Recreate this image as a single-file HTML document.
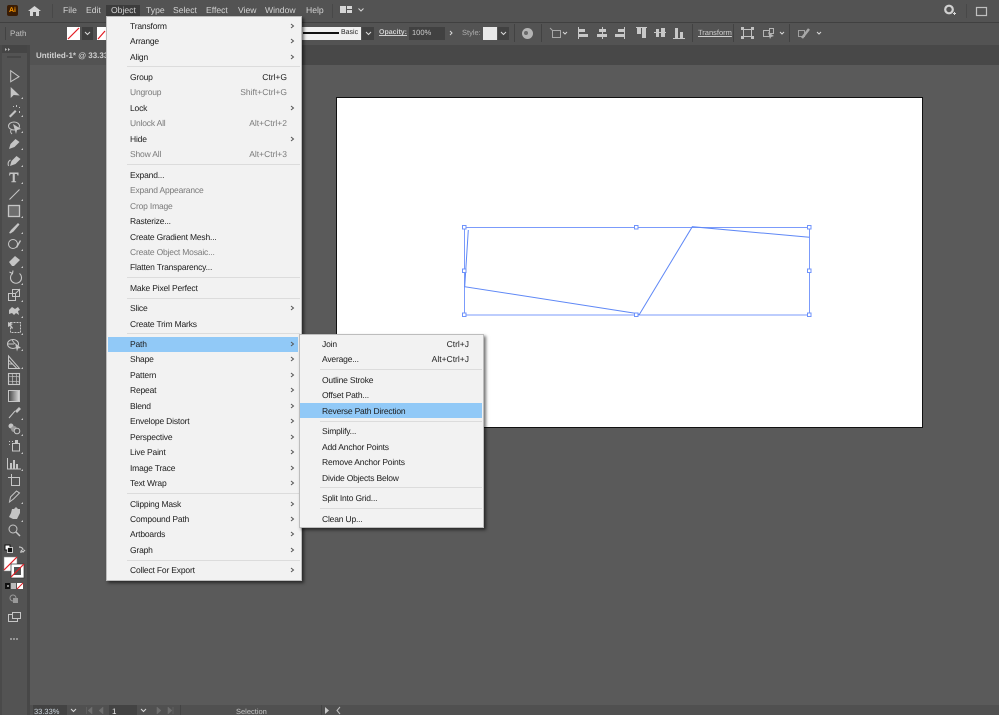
<!DOCTYPE html>
<html><head><meta charset="utf-8"><style>
html,body{margin:0;padding:0;background:#5a5a5a}
#r{position:relative;width:999px;height:715px;overflow:hidden;background:#5a5a5a;font:8.5px/16px "Liberation Sans",sans-serif;color:#1e1e1e;text-rendering:geometricPrecision;filter:blur(.3px)}
#r div{position:absolute}
.b{white-space:nowrap}
.m{color:#d4d4d4;top:2px;font-size:8.6px;line-height:16px;white-space:nowrap}
.l{left:130px;white-space:nowrap;color:#1c1c1c;letter-spacing:-.18px}
.s{left:322px;white-space:nowrap;color:#1c1c1c;letter-spacing:-.18px}
.g{color:#7a7a7a}
.k{right:712px;white-space:nowrap}
.k2{right:530px;white-space:nowrap}
.c{color:#cfcfcf;white-space:nowrap;font-size:7.5px}
.h{height:1px;background:#dcdcdc}
</style></head><body><div id="r">
<div style="left:0;top:0;width:999px;height:22px;background:#535353"></div>
<div style="left:0;top:22px;width:999px;height:1px;background:#404040"></div>
<div style="left:0;top:23px;width:999px;height:22px;background:#535353"></div>
<div style="left:0;top:45px;width:999px;height:20px;background:#484848"></div>
<div style="left:29px;top:45px;width:220px;height:20px;background:#535353"></div>
<div style="left:0;top:45px;width:28px;height:670px;background:#535353"></div>
<div style="left:2px;top:45px;width:25px;height:8px;background:#454545"></div>
<div style="left:0;top:45px;width:2px;height:670px;background:#4a4a4a"></div>
<div style="left:27px;top:45px;width:3px;height:670px;background:#474747"></div>
<div style="left:30px;top:705px;width:969px;height:10px;background:#505050"></div>

<div style="left:336px;top:97px;width:585px;height:329px;background:#fff;border:1px solid #111"></div>

<div class="m" style="left:63px">File</div>
<div class="m" style="left:86px">Edit</div>
<div style="left:106px;top:5px;width:34px;height:11px;background:#3c3c3c"></div>
<div class="m" style="left:111px">Object</div>
<div class="m" style="left:146px">Type</div>
<div class="m" style="left:173px">Select</div>
<div class="m" style="left:206px">Effect</div>
<div class="m" style="left:238px">View</div>
<div class="m" style="left:265px">Window</div>
<div class="m" style="left:306px">Help</div>

<div style="left:7px;top:5px;width:11px;height:11px;background:#3a1c04;border-radius:2px"></div>
<div class="b" style="left:9px;top:5px;line-height:11px;font-size:7px;font-weight:bold;color:#ff9a00">Ai</div>

<div class="c" style="left:10px;top:26px;font-size:8px;color:#c0c0c0">Path</div>
<div style="left:67px;top:27px;width:13px;height:13px;background:#fff"></div>
<div style="left:82px;top:27px;width:11px;height:13px;background:#3e3e3e"></div>
<div style="left:97px;top:27px;width:9px;height:13px;background:#fff"></div>
<div style="left:302px;top:27px;width:59px;height:13px;background:#f0f0f0"></div>
<div style="left:303px;top:32px;width:36px;height:2px;background:#111"></div>
<div class="b" style="left:341px;top:25px;font-size:7px;color:#222">Basic</div>
<div style="left:362px;top:27px;width:12px;height:13px;background:#414141"></div>
<div class="c" style="left:379px;top:25px;font-weight:bold;font-size:7px;text-decoration:underline">Opacity:</div>
<div style="left:409px;top:27px;width:36px;height:13px;background:#414141"></div>
<div class="c" style="left:412px;top:25px">100%</div>
<div class="c" style="left:462px;top:25px;color:#adadad">Style:</div>
<div style="left:483px;top:27px;width:14px;height:13px;background:#e8e8e8"></div>
<div style="left:498px;top:27px;width:11px;height:13px;background:#414141"></div>
<div class="c" style="left:698px;top:25px;text-decoration:underline">Transform</div>
<div class="c" style="left:36px;top:48px;font-weight:bold;font-size:8px;color:#d0d0d0">Untitled-1* @ 33.33%</div>

<svg style="position:absolute;left:0;top:0" width="999" height="715" viewBox="0 0 999 715">
<defs><linearGradient id="gr"><stop offset="0" stop-color="#444"/><stop offset="1" stop-color="#ddd"/></linearGradient></defs>
<g fill="#d6d6d6">
<path d="M28 11l6.500-5 6.500 5h-2v5h-3v-4h-3v4h-3v-5z"/>
<rect x="340" y="6" width="6" height="7"/><rect x="347" y="6" width="5" height="3"/><rect x="347" y="10" width="5" height="3"/>
<path d="M953 13h1v-1h1v1h1v1h-1v1h-1v-1h-1z"/>
</g>
<circle cx="949" cy="9.500" r="3.800" fill="none" stroke="#d0d0d0" stroke-width="2.200"/>
<rect x="976.500" y="7.500" width="10" height="8" fill="none" stroke="#c0c0c0" stroke-width="1.200"/>
<path d="M358.500 8.500l2.500 2.500 2.500-2.500" fill="none" stroke="#d6d6d6"/>
<path d="M68 39l11-11" stroke="#e31b23" stroke-width="1.200"/>
<path d="M98 39l7-8" stroke="#e31b23" stroke-width="1.200"/>
<path d="M85 32l2.500 2.500 2.500-2.500M366 32l2.500 2.500 2.500-2.500M501 32l2.500 2.500 2.500-2.500M450 31l2 2-2 2M563 32l2 2 2-2M780 32l2 2 2-2M817 32l2 2 2-2" fill="none" stroke="#d8d8d8"/>
<circle cx="527.500" cy="33.500" r="5.500" fill="#b4b4b4"/><circle cx="526" cy="33" r="2" fill="#6a6a6a"/>
<path d="M552.500 30.500h8v7h-8zM550 28l3 3" fill="none" stroke="#a8a8a8"/>
<g fill="#c8c8c8">
<rect x="578" y="27" width="1" height="12"/><rect x="579" y="29" width="6" height="3"/><rect x="579" y="34" width="9" height="3"/>
<rect x="602" y="27" width="1" height="12"/><rect x="599" y="29" width="7" height="3"/><rect x="597" y="34" width="10" height="3"/>
<rect x="624" y="27" width="1" height="12"/><rect x="618" y="29" width="6" height="3"/><rect x="615" y="34" width="9" height="3"/>
<rect x="636" y="27" width="11" height="1"/><rect x="637" y="28" width="4" height="6"/><rect x="642" y="28" width="4" height="10"/>
<rect x="654" y="32" width="12" height="1"/><rect x="656" y="29" width="3" height="8"/><rect x="661" y="28" width="4" height="9"/>
<rect x="673" y="38" width="12" height="1"/><rect x="675" y="28" width="3" height="10"/><rect x="680" y="32" width="3" height="6"/>
</g>
<path d="M743.500 29.500h8v7h-8z" fill="none" stroke="#c0c0c0"/>
<path d="M741 27h3v3h-3zM751 27h3v3h-3zM741 36h3v3h-3zM751 36h3v3h-3z" fill="#c0c0c0"/>
<path d="M763.500 30.500h6v6h-6zM769.500 28.500h4v5h-4z" fill="none" stroke="#b4b4b4"/><path d="M768 32l6 4-3 1-1 2z" fill="#b4b4b4"/>
<path d="M798.500 30.500h6v6h-6z" fill="none" stroke="#a0a0a0"/><path d="M802 38l7-9" stroke="#a8a8a8" stroke-width="2.500"/>
<path d="M514.500 24v18M541.500 24v18M692.500 24v18M733.500 24v18M789.500 24v18M5.500 27v13" stroke="#424242"/>
<path d="M332.500 4v14M52.500 4v14M966.500 4v14" stroke="#484848"/>
<path d="M5 48l2 1.500-2 1.500zM8 48l2 1.500-2 1.500z" fill="#bbb"/>
<rect x="7" y="56" width="14" height="2" fill="#474747"/>

<!-- tools -->
<g fill="none" stroke="#c6c6c6" stroke-width="1">
<path d="M10.700 70.700v11l8.300-5z"/>
<path d="M9.500 199.500l10-10"/>
<rect x="8.500" y="205.500" width="11" height="11" fill="#6e6e6e" stroke-width="1.300"/>
<ellipse cx="14" cy="126" rx="5.500" ry="4"/><path d="M11 130c-1 2 0 3 1 4"/>
<path d="M8.500 166c-1-3 0-5 2-6"/>
<circle cx="13" cy="244" r="4.500"/>
<path d="M19.500 273.500a5.500 5.500 0 1 1-7 0M9.500 272l3 1.500 .5-3" stroke-width="1.100"/>
<rect x="8.500" y="293.500" width="7" height="7"/><rect x="12.500" y="289.500" width="7" height="7"/><path d="M15 294l5-5"/>
<path d="M10.500 322.500h10v10h-10z" stroke-dasharray="2 1"/>
<ellipse cx="13" cy="344" rx="5.500" ry="4.500"/><path d="M8 344h6M12 340l3 4"/>
<path d="M8.500 356v12.500h11zM8.500 360l8 8M8.500 364h4"/>
<rect x="8.500" y="373.500" width="11" height="11" stroke-width="1.100"/>
<path d="M9 376c3 2 6-1 10 1M9 381c3 2 6-1 10 1M12 374c2 3-1 6 1 10M16 374c2 3-1 6 1 10" stroke-width=".7"/>
<rect x="8.500" y="390.500" width="11" height="11" fill="url(#gr)"/>
<path d="M9 418l6-7"/>
<rect x="12.500" y="443.500" width="7" height="7.500"/>
<path d="M7.500 458v11h13.500"/>
<rect x="11.500" y="477.500" width="8" height="8"/><path d="M8 477.500h6M11.500 474v6"/>
<path d="M9.500 502l1-5 6-6 3 2-6 6z"/>
<circle cx="13" cy="529" r="4"/><path d="M16 532l4 4" stroke-width="1.500"/>
<path d="M19 547c2 0 4 1 4 3M25 550l-2 2-2-2M20 552h2" stroke-width="1.200"/>
<rect x="8.500" y="614.500" width="9" height="7"/><rect x="12.500" y="612.500" width="8" height="6" fill="#535353"/>
</g>
<g fill="#c4c4c4">
<path d="M10.700 87v11l3-3 6 .5z"/>
<path d="M9 116l6-6 1.500 1.500-6 6zM16 105h1v2h-1zM19 107h1v1h-1zM19 111h1v2h-1zM13 106h1v1h-1z"/>
<path d="M13 124l8 5-4 1-1 4z"/>
<path d="M9 149l1.500-5 5-5 4 3-5 5z"/>
<path d="M10 166l1.500-5 5-5 4 3-5 5z"/>
<path d="M9.500 172.500h9v3h-1l-.5-1.500h-2.200v7.200h1.300v1h-4.700v-1h1.300v-7.200h-2.200l-.5 1.500h-1z"/>
<path d="M9 233l2-3 7-7 1.500 1.500-6 7-3 2z"/>
<path d="M16 247l4-7 1 1-4 7z"/>
<path d="M9 262l6-6 5 4-6 6h-2z"/>
<path d="M9 310l3-3 3 2 3-2 2 3-2 1 1 4-3-2-2 2-2-2-3 1z"/>
<path d="M8 322l5 2-2 1 2 3-1 1-2-3-2 1z"/>
<path d="M15 343l6 5-3 .5-1 3z"/>
<path d="M15 411l4-4 2 2-4 4z"/>
<circle cx="11" cy="426" r="2.500"/><circle cx="14" cy="429" r="3" fill="#999"/><circle cx="17" cy="431" r="2.800" fill="#535353" stroke="#c6c6c6"/>
<path d="M9 441h1v1h-1zM12 441h1v1h-1zM9 444h1v1h-1zM15 440h3v3h-3z"/>
<rect x="10" y="463" width="2" height="6"/><rect x="13" y="460" width="2" height="9"/><rect x="16" y="464" width="2" height="5"/>
<path d="M9 517l2-4 1-4 2 0 2-2 2 2 2 0 0 4-3 6h-4z"/>
<circle cx="11" cy="639" r=".9"/><circle cx="14" cy="639" r=".9"/><circle cx="17" cy="639" r=".9"/>
<path d="M23 97v2h-2zM23 115v2h-2zM23 131v2h-2zM23 148v2h-2zM23 165v2h-2zM23 182v2h-2zM23 199v2h-2zM23 216v2h-2zM23 232v2h-2zM23 249v2h-2zM23 266v2h-2zM23 283v2h-2zM23 300v2h-2zM23 316v2h-2zM23 333v2h-2zM23 349v2h-2zM23 367v2h-2zM23 418v2h-2zM23 434v2h-2zM23 452v2h-2zM23 469v2h-2zM23 502v2h-2zM23 520v2h-2z"/>
</g>
<rect x="5" y="545" width="5" height="5" fill="#fff" stroke="#111"/><rect x="7.500" y="547.500" width="5" height="5" fill="#111" stroke="#fff" stroke-width=".7"/>
<rect x="4" y="557" width="13" height="14" fill="#fff" stroke="#888" stroke-width=".5"/>
<path d="M4 570l13-13" stroke="#e31b23" stroke-width="1.200"/>
<rect x="11" y="564" width="13" height="14" fill="#fff" stroke="#333" stroke-width=".7"/>
<rect x="14" y="567" width="7" height="8" fill="#555"/>
<path d="M11 577l13-13" stroke="#e31b23" stroke-width="1.200"/>
<rect x="5" y="583" width="5" height="6" fill="#111"/><rect x="7" y="585" width="2" height="2" fill="#888"/>
<rect x="11" y="583" width="5" height="6" fill="#bbb"/><rect x="17" y="583" width="6" height="6" fill="#fff"/>
<path d="M17 589l6-6" stroke="#e31b23"/>
<circle cx="13" cy="598" r="3" fill="none" stroke="#999"/><rect x="13" y="598" width="5" height="5" fill="#999"/>

<g fill="none" stroke-width="1">
<path d="M464.500 227.500h345v87.500h-345z" stroke="#7b9bfb"/>
<path d="M468.300 230L464.700 286.700L636.700 313.500L639.300 314.500L692.300 226.700L809.300 237.300" stroke="#5f88f6"/>
</g>
<g fill="#fff" stroke="#6f93fb">
<rect x="462.500" y="225.500" width="3.500" height="3.500"/><rect x="634.500" y="225.500" width="3.500" height="3.500"/><rect x="807.500" y="225.500" width="3.500" height="3.500"/>
<rect x="462.500" y="269" width="3.500" height="3.500"/><rect x="807.500" y="269" width="3.500" height="3.500"/>
<rect x="462.500" y="313" width="3.500" height="3.500"/><rect x="634.500" y="313" width="3.500" height="3.500"/><rect x="807.500" y="313" width="3.500" height="3.500"/>
</g>
<path d="M71 709l2.500 2.500 2.500-2.500M141 709l2.500 2.500 2.500-2.500" fill="none" stroke="#d8d8d8"/>
<path d="M86.500 707v7M92 707l-4 3.500 4 3.500zM103 707l-4 3.500 4 3.500zM157 707l4 3.500-4 3.500zM168 707l4 3.500-4 3.500zM173 707v7" fill="#6e6e6e" stroke="#6e6e6e" stroke-width=".5"/>
<path d="M180.500 705v10M321.500 705v10" stroke="#444"/>
<path d="M325 707l4 3.500-4 3.500z" fill="#c8c8c8"/><path d="M340 707l-3 3.500 3 3.500" fill="none" stroke="#c0c0c0"/>
</svg>

<div style="left:33px;top:705px;width:34px;height:10px;background:#434343"></div>
<div class="c" style="left:34px;top:703.500px;color:#cfd8e0">33.33%</div>
<div style="left:68px;top:705px;width:11px;height:10px;background:#454545;z-index:-1"></div>
<div style="left:109px;top:705px;width:28px;height:10px;background:#434343"></div>
<div class="c" style="left:112px;top:703.500px;font-size:8px;color:#eee">1</div>
<div class="c" style="left:236px;top:703.500px;color:#c4c4c4">Selection</div>

<!-- Object menu -->
<div style="left:106px;top:16px;width:194px;height:563px;background:#f2f2f2;border:1px solid #bdbdbd;box-shadow:2px 2px 3px rgba(0,0,0,.55)"></div>
<div class="h" style="left:127px;top:66px;width:173px"></div>
<div class="h" style="left:127px;top:164px;width:173px"></div>
<div class="h" style="left:127px;top:277px;width:173px"></div>
<div class="h" style="left:127px;top:298px;width:173px"></div>
<div class="h" style="left:127px;top:333px;width:173px"></div>
<div class="h" style="left:127px;top:493px;width:173px"></div>
<div class="h" style="left:127px;top:560px;width:173px"></div>
<div style="left:108px;top:337px;width:190px;height:15px;background:#91c9f7"></div>

<div class="l" style="top:18px">Transform</div>
<div class="l" style="top:33px">Arrange</div>
<div class="l" style="top:49px">Align</div>
<div class="l" style="top:69px">Group</div>
<div class="l g" style="top:84px">Ungroup</div>
<div class="l" style="top:100px">Lock</div>
<div class="l g" style="top:115px">Unlock All</div>
<div class="l" style="top:131px">Hide</div>
<div class="l g" style="top:146px">Show All</div>
<div class="l" style="top:167px">Expand...</div>
<div class="l g" style="top:182px">Expand Appearance</div>
<div class="l g" style="top:198px">Crop Image</div>
<div class="l" style="top:213px">Rasterize...</div>
<div class="l" style="top:229px">Create Gradient Mesh...</div>
<div class="l g" style="top:244px">Create Object Mosaic...</div>
<div class="l" style="top:259px">Flatten Transparency...</div>
<div class="l" style="top:280px">Make Pixel Perfect</div>
<div class="l" style="top:300px">Slice</div>
<div class="l" style="top:316px">Create Trim Marks</div>
<div class="l" style="top:336px">Path</div>
<div class="l" style="top:351px">Shape</div>
<div class="l" style="top:367px">Pattern</div>
<div class="l" style="top:382px">Repeat</div>
<div class="l" style="top:398px">Blend</div>
<div class="l" style="top:413px">Envelope Distort</div>
<div class="l" style="top:429px">Perspective</div>
<div class="l" style="top:444px">Live Paint</div>
<div class="l" style="top:460px">Image Trace</div>
<div class="l" style="top:475px">Text Wrap</div>
<div class="l" style="top:496px">Clipping Mask</div>
<div class="l" style="top:511px">Compound Path</div>
<div class="l" style="top:526px">Artboards</div>
<div class="l" style="top:542px">Graph</div>
<div class="l" style="top:562px">Collect For Export</div>

<div class="k" style="top:69px">Ctrl+G</div>
<div class="k g" style="top:84px">Shift+Ctrl+G</div>
<div class="k g" style="top:115px">Alt+Ctrl+2</div>
<div class="k g" style="top:146px">Alt+Ctrl+3</div>

<svg style="position:absolute;left:0;top:0" width="999" height="715" viewBox="0 0 999 715">
<path fill="none" stroke="#555" stroke-width="1" d="M291 24l2.500 2-2.500 2M291 39l2.500 2-2.500 2M291 55l2.500 2-2.500 2M291 106l2.500 2-2.500 2M291 137l2.500 2-2.500 2M291 306l2.500 2-2.500 2M291 342l2.500 2-2.500 2M291 357l2.500 2-2.500 2M291 373l2.500 2-2.500 2M291 388l2.500 2-2.500 2M291 404l2.500 2-2.500 2M291 419l2.500 2-2.500 2M291 435l2.500 2-2.500 2M291 450l2.500 2-2.500 2M291 466l2.500 2-2.500 2M291 481l2.500 2-2.500 2M291 502l2.500 2-2.500 2M291 517l2.500 2-2.500 2M291 532l2.500 2-2.500 2M291 548l2.500 2-2.500 2M291 568l2.500 2-2.500 2"/>
</svg>

<!-- Path submenu -->
<div style="left:299px;top:334px;width:183px;height:192px;background:#f2f2f2;border:1px solid #bdbdbd;box-shadow:2px 2px 3px rgba(0,0,0,.55)"></div>
<div class="h" style="left:320px;top:369px;width:162px"></div>
<div class="h" style="left:320px;top:421px;width:162px"></div>
<div class="h" style="left:320px;top:487px;width:162px"></div>
<div class="h" style="left:320px;top:508px;width:162px"></div>
<div style="left:300px;top:403px;width:182px;height:15px;background:#91c9f7"></div>
<div class="s" style="top:336px">Join</div>
<div class="s" style="top:351px">Average...</div>
<div class="s" style="top:372px">Outline Stroke</div>
<div class="s" style="top:387px">Offset Path...</div>
<div class="s" style="top:403px">Reverse Path Direction</div>
<div class="s" style="top:423px">Simplify...</div>
<div class="s" style="top:439px">Add Anchor Points</div>
<div class="s" style="top:454px">Remove Anchor Points</div>
<div class="s" style="top:470px">Divide Objects Below</div>
<div class="s" style="top:490px">Split Into Grid...</div>
<div class="s" style="top:511px">Clean Up...</div>
<div class="k2" style="top:336px">Ctrl+J</div>
<div class="k2" style="top:351px">Alt+Ctrl+J</div>
</div></body></html>
